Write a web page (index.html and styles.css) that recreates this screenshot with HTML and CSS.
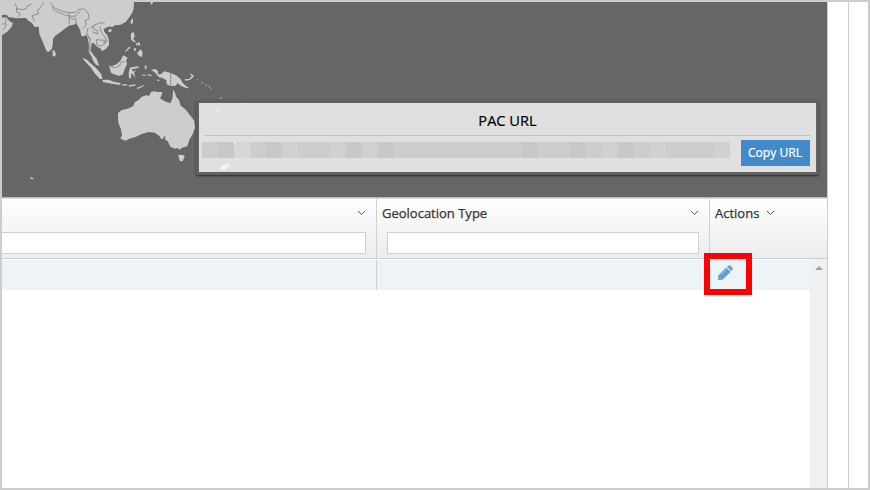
FILE: index.html
```
<!DOCTYPE html>
<html lang="en">
<head>
<meta charset="utf-8">
<title>PAC URL</title>
<link rel="stylesheet" href="styles.css">
</head>
<body>
<div class="frame">
  <main class="panel">
    <section class="map">
      <svg class="world" viewBox="6 6 2475 585" aria-hidden="true">
        <g class="land">
          <path d="M6 6H402L401 25 397 38 388 52 378 65 362 74 345 76 336 82 330 79 318 83 311 88 313 95 322 106 327 120 327 135 318 146 305 154 303 146 296 143 288 137 281 129 275 130 273 141 272 152 281 166 290 176 294 188 298 197 288 194 280 183 274 168 266 155 267 140 264 118 260 104 252 109 244 108 241 92 234 78 229 70 222 74 210 76 200 82 185 94 165 108 159 117 158 135 155 148 144 157 138 150 128 125 118 102 116 80 104 81 96 70 85 62 78 54 50 55 25 51 20 44 6 45Z"/>
          <path d="M6 53L20 52 27 62 39 70 34 82 22 95 10 103 6 105Z"/>
          <path d="M158 149L164 153 168 164 163 170 158 167ZM325 90L332 86 336 91 331 97 325 95ZM395 58L399 54 399 65 395 74 391 66ZM452 6H459L456 14 452 12Z"/>
          <path d="M394 98L402 97 404 108 400 118 408 125 404 127 394 121 392 108ZM407 130L412 129 414 138 408 135ZM413 125L420 129 421 139 415 134ZM414 156L422 148 428 157 426 171 418 168 411 160ZM403 143L409 146 406 154 401 151ZM389 139L375 154 377 156 391 143Z"/>
          <path d="M247 174L259 178 274 192 289 205 303 221 308 238 299 236 284 220 272 202 259 189ZM307 240L326 239 341 245 362 249 360 255 336 251 309 246Z"/>
          <path d="M327 197L338 198 350 192 361 182 370 166 383 173 378 181 381 193 374 208 368 224 357 227 342 223 333 218Z"/>
          <path d="M390 203L399 201 417 199 415 204 395 208 399 215 408 211 402 219 407 235 398 223 394 219 393 236 387 233 386 218ZM435 195L440 199 439 209 434 203ZM365 253L382 253 381 257 366 256ZM386 256L407 253 406 257 387 260ZM410 264L431 255 431 258 413 267ZM427 224H437V227H427ZM443 222L456 226 453 229 442 225Z"/>
          <path d="M453 210L465 207 474 213 474 223 482 223 493 214 512 219 528 226 541 236 548 249 557 257 568 265 557 264 543 257 532 250 527 257 512 258 500 253 499 241 489 235 475 230 466 218ZM553 238L568 237 577 226 579 232 570 240 557 242ZM571 220L582 228 580 231 570 223ZM591 237L596 239 594 241ZM603 245L611 249 609 251ZM614 251L622 255 620 257ZM626 256L631 262 628 263ZM631 264L636 268 633 269ZM472 239H478V243H472Z"/>
          <path class="faint" d="M660 292H665V297H660Z"/>
          <path d="M400 318L404 307 417 299 424 291 438 286 447 287 454 275 466 274 470 276 486 276 486 283 480 295 494 304 511 310 517 296 520 268 526 281 529 291 537 300 542 317 556 328 569 344 583 362 585 383 578 403 568 419 562 439 544 444 540 450 532 444 525 446 511 440 503 424 495 418 496 406 487 418 483 416 478 408 464 398 446 396 425 402 405 412 388 416 377 422 363 417 362 413 366 407 363 388 356 371 354 358 354 340 364 331 387 325Z"/>
          <path d="M535 464L552 466 554 470 548 484 540 483 536 472ZM91 531L99 534 101 538 92 537Z"/>
        </g>
        <g class="borders">
          <path d="M45 10L50 22 49 35 61 41 55 51M49 26L68 29 80 25 83 17 95 12M132 7L119 24 112 34 116 41 96 47 103 64M150 7L157 14 158 21 175 29 191 35 209 38 227 37 236 28 253 27 264 39 268 55 256 61 259 75 248 86M158 22L161 30 187 42 206 48 224 49 231 44 241 33M207 38L208 73M209 54L220 58 226 54 230 76M264 84L260 99 270 117 269 151M271 84L284 75 302 68 314 70M284 75L278 84 294 94 293 101 277 96M299 80L304 97 315 111 322 124 309 127M288 119L315 121 315 131 302 139 291 135 289 120M264 112L272 118M268 151L277 157M330 200L346 203 359 197 362 187 374 184M512 219V257M6 72H15L19 54M8 91L15 84 20 72"/>
        </g>
      </svg>
      <div class="pac">
        <svg class="isles" viewBox="0 0 54 69" aria-hidden="true"><path d="M17 5L22 9 20 10ZM43 0L48 0 45 1ZM34 37L37 41 36 42ZM21 66L24 62 31 60 28 65 26 67Z"/></svg>
        <h2 class="pac-title">PAC URL</h2>
        <div class="pac-row">
          <div class="redacted"><i></i><i class="d"></i><i class="l"></i><i></i><i class="d"></i><i class="m"></i><i></i><i></i><i class="m"></i><i class="d"></i><i class="m"></i><i class="d"></i><i></i><i></i><i></i><i></i><i></i><i></i><i></i><i></i><i class="d"></i><i></i><i></i><i class="d"></i><i></i><i class="m"></i><i class="d"></i><i></i><i class="m"></i><i></i><i></i><i></i><i class="m"></i></div>
          <button class="copy" type="button">Copy URL</button>
        </div>
      </div>
    </section>
    <section class="grid">
      <div class="head">
        <div class="cell first"><div class="label"><span></span><svg class="chev" viewBox="0 0 9 6"><path d="M1 1L4.5 4.5 8 1"/></svg></div><input class="filter" type="text" aria-label="Filter"></div>
        <div class="cell geo"><div class="label"><span>Geolocation Type</span><svg class="chev" viewBox="0 0 9 6"><path d="M1 1L4.5 4.5 8 1"/></svg></div><input class="filter" type="text" aria-label="Filter type"></div>
        <div class="cell actions"><div class="label"><span>Actions</span><svg class="chev" viewBox="0 0 9 6"><path d="M1 1L4.5 4.5 8 1"/></svg></div></div>
      </div>
      <div class="body">
        <div class="row">
          <div class="first"></div>
          <div class="geo"></div>
          <div class="edit"><svg class="pencil" viewBox="0 0 16 16"><path d="M1 15L1.3 10.4 9.3 2.4 13.6 6.7 5.6 14.7ZM10.1 1.7L11.3.6Q12.4-.3 13.4.7L15.3 2.6Q16.3 3.6 15.3 4.6L14.3 5.9Z"/><path class="shine" d="M4.3 9.5L9.4 4.5M2.2 12.2L3.8 13.8"/></svg><span class="highlight"></span></div>
        </div>
        <div class="scroll"><span class="up"></span></div>
      </div>
    </section>
  </main>
  <aside class="gutter"></aside>
</div>
</body>
</html>
```
FILE: styles.css
```
* { box-sizing: border-box; }
body { margin: 0; font-family: "Open Sans", sans-serif; color: #333; }
.frame { display: flex; width: 870px; height: 490px; border: 2px solid #ccc; background: #fff; overflow: hidden; }
.panel { display: flex; flex-direction: column; width: 826px; border-right: 1px solid #ccc; }
.gutter { width: 21px; border-right: 1px solid #c3cfdb; }

.map { position: relative; height: 195px; background: #666; }
.world { display: block; width: 825px; height: 195px; }
.land { fill: #cdcdcd; }
.faint { fill: #999; }
.borders { fill: none; stroke: #777; stroke-width: 2.2; }

.pac { position: absolute; left: 194px; top: 98px; width: 623px; height: 75px; padding: 0 6px; border: 3px solid #606060; border-radius: 2px; background: #e0e0e0; box-shadow: 0 1px 2px rgba(0, 0, 0, .6); }
.isles { position: absolute; left: 0; top: 0; width: 54px; height: 69px; fill: #f4f4f4; }
.pac-title { height: 33px; margin: 0; border-bottom: 1px solid #c0c0c0; font-size: 14.6px; line-height: 35px; font-weight: 400; text-align: center; color: #000; -webkit-text-stroke: .2px #000; }
.pac-row { display: flex; justify-content: space-between; align-items: flex-start; padding-top: 4px; margin-left: -3px; }
.redacted { display: flex; height: 16px; margin-top: 2px; }
.redacted i { width: 16px; background: #cdcdcd; }
.redacted .d { background: #c8c8c8; }
.redacted .m { background: #d1d1d1; }
.redacted .l { background: #d7d7d7; }
.copy { width: 69px; height: 26px; padding: 0 1px 1px 0; border: 0; background: #428bca; color: #fff; font: 12.1px "Open Sans", sans-serif; -webkit-text-stroke: .2px #fff; }

.grid { display: flex; flex-direction: column; flex: 1; border-top: 1px solid #bbb; }
.head { display: flex; height: 61px; border-top: 1px solid #ddd; border-bottom: 1px solid #d0d0d0; background: linear-gradient(#fff, #ececec); }
.first { width: 375px; border-right: 1px solid #d0d0d0; }
.geo { width: 333px; border-right: 1px solid #d0d0d0; }
.head .first { padding-right: 10px; }
.head .geo { padding: 0 10px; }
.label { display: flex; align-items: center; justify-content: space-between; height: 28px; font-size: 13px; -webkit-text-stroke: .25px #333; }
.geo .label { margin: 0 0 0 -5px; }
.actions .label { padding-left: 5px; gap: 7px; justify-content: flex-start; }
.chev { width: 9px; height: 6px; fill: none; stroke: #555; stroke-width: 1; }
.filter { display: block; width: 100%; height: 22px; margin: 5px 0 0; border: 1px solid #d0d0d0; background: #fff; }
.head .first .filter { border-left: 0; }

.body { display: flex; flex: 1; }
.row { display: flex; width: 808px; height: 30px; margin-top: 1px; background: #edf3f6; }
.row .geo { border-right: 0; }
.edit { position: relative; width: 100px; padding: 5px 0 0 7px; }
.pencil { display: block; width: 16px; height: 16px; fill: #5a9fd6; }
.shine { fill: none; stroke: #a9cbe8; stroke-width: .8; }
.highlight { position: absolute; left: -6px; top: -7px; width: 48px; height: 42px; border: 6px solid #f00; }
.scroll { display: flex; justify-content: center; width: 17px; padding-top: 7px; background: #f0f0f0; }
.up { width: 0; height: 0; border: 4px solid transparent; border-top: 0; border-bottom-color: #a0a0a0; }
```
